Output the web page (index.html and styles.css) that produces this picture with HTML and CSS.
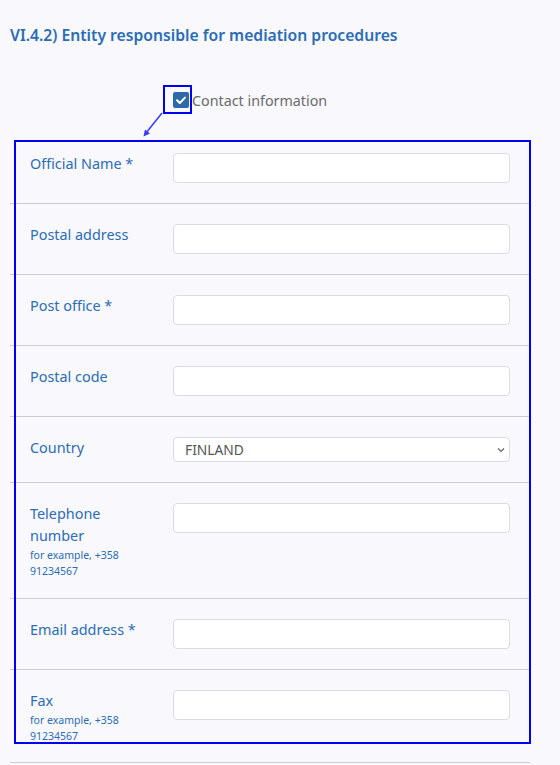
FILE: index.html
```html
<!DOCTYPE html>
<html lang="en">
<head>
<meta charset="utf-8">
<title>Entity responsible for mediation procedures</title>
<link rel="stylesheet" href="styles.css">
</head>
<body>
<main class="page">
  <h2 class="title">VI.4.2) Entity responsible for mediation procedures</h2>

  <div class="toggle">
    <span class="cb">
      <svg width="16" height="16" viewBox="0 0 16 16"><rect x="0" y="0" width="16" height="16" rx="2" fill="#2f6aa8"/><path d="M4 8.2 L6.8 11 L12 5.6" fill="none" stroke="#fff" stroke-width="2" stroke-linecap="round" stroke-linejoin="round"/></svg>
    </span>
    <span class="toggle-label">Contact information</span>
    <span class="hl"></span>
  </div>

  <div class="fields">
    <div class="row">
      <div class="label"><span>Official Name *</span></div>
      <div class="control"><input class="input" type="text"></div>
    </div>
    <div class="row">
      <div class="label"><span>Postal address</span></div>
      <div class="control"><input class="input" type="text"></div>
    </div>
    <div class="row">
      <div class="label"><span>Post office *</span></div>
      <div class="control"><input class="input" type="text"></div>
    </div>
    <div class="row">
      <div class="label"><span>Postal code</span></div>
      <div class="control"><input class="input" type="text"></div>
    </div>
    <div class="row">
      <div class="label"><span>Country</span></div>
      <div class="control">
        <div class="select"><span>FINLAND</span>
          <svg class="chev" width="8" height="6" viewBox="0 0 8 6"><path d="M1 1.5 L4 4.5 L7 1.5" fill="none" stroke="#666" stroke-width="1.2"/></svg>
        </div>
      </div>
    </div>
    <div class="row row-hint">
      <div class="label"><span class="wrap">Telephone number</span><small class="hint">for example, +358 91234567</small></div>
      <div class="control"><input class="input" type="text"></div>
    </div>
    <div class="row">
      <div class="label"><span>Email address *</span></div>
      <div class="control"><input class="input" type="text"></div>
    </div>
    <div class="row row-last">
      <div class="label"><span>Fax</span><small class="hint">for example, +358 91234567</small></div>
      <div class="control"><input class="input" type="text"></div>
    </div>
  </div>

  <div class="focus-box"></div>
  <svg class="arrow" width="24" height="26" viewBox="0 0 24 26">
    <path d="M20 1 L4 21" stroke="#3b3bf5" stroke-width="1.5" fill="none"/>
    <path d="M1.5 24.5 L3 17.5 L8 21.5 Z" fill="#3b3bf5"/>
  </svg>
</main>
</body>
</html>
```

FILE: styles.css
```css
html, body {
  margin: 0;
  padding: 0;
  background: #f8f8fd;
}
body {
  font-family: "Noto Sans", "Open Sans", sans-serif;
}
.page {
  position: relative;
  width: 520px;
  padding: 24px 10px 0 10px;
}
.title {
  margin: 0;
  font-size: 15.7px;
  line-height: 22px;
  font-weight: 600;
  color: #2b6db4;
}
.toggle {
  position: relative;
  display: flex;
  align-items: center;
  margin-top: 42px;
  padding-left: 163px;
  height: 24px;
}
.cb {
  display: block;
  width: 16px;
  height: 16px;
  margin-right: 3px;
}
.cb svg { display: block; }
.toggle-label {
  font-size: 14.3px;
  color: #6b6b6b;
}
.hl {
  position: absolute;
  left: 153px;
  top: -3px;
  width: 25px;
  height: 25px;
  border: 2px solid #0000f0;
}
.fields {
  margin-top: 21px;
}
.row {
  display: flex;
  padding: 20px;
  border-bottom: 1px solid #cccccf;
}
.row-hint {
  padding-bottom: 19px;
}
.row-last {
  padding-bottom: 18px;
}
.label {
  width: 143px;
  flex: none;
  font-size: 14.4px;
  line-height: 22px;
  color: #2b6db4;
}
.label span {
  display: block;
}
.label .wrap {
  width: 100px;
}
.hint {
  display: block;
  font-size: 10.5px;
  line-height: 16px;
  width: 100px;
  color: #2b6db4;
}
.control {
  flex: 1;
}
.input {
  display: block;
  box-sizing: border-box;
  width: 100%;
  height: 30px;
  margin: 0;
  border: 1px solid #dcdcdf;
  border-radius: 4px;
  background: #fff;
  outline: none;
}
.select {
  box-sizing: border-box;
  display: flex;
  align-items: center;
  justify-content: space-between;
  height: 25px;
  padding: 0 4px 0 11px;
  border: 1px solid #dcdcdf;
  border-radius: 4px;
  background: #fff;
  font-size: 13.8px;
  color: #555;
}
.focus-box {
  position: absolute;
  left: 14px;
  top: 140px;
  width: 513px;
  height: 600px;
  border: 2px solid #0000f0;
}
.arrow {
  position: absolute;
  left: 142px;
  top: 112px;
}
```
